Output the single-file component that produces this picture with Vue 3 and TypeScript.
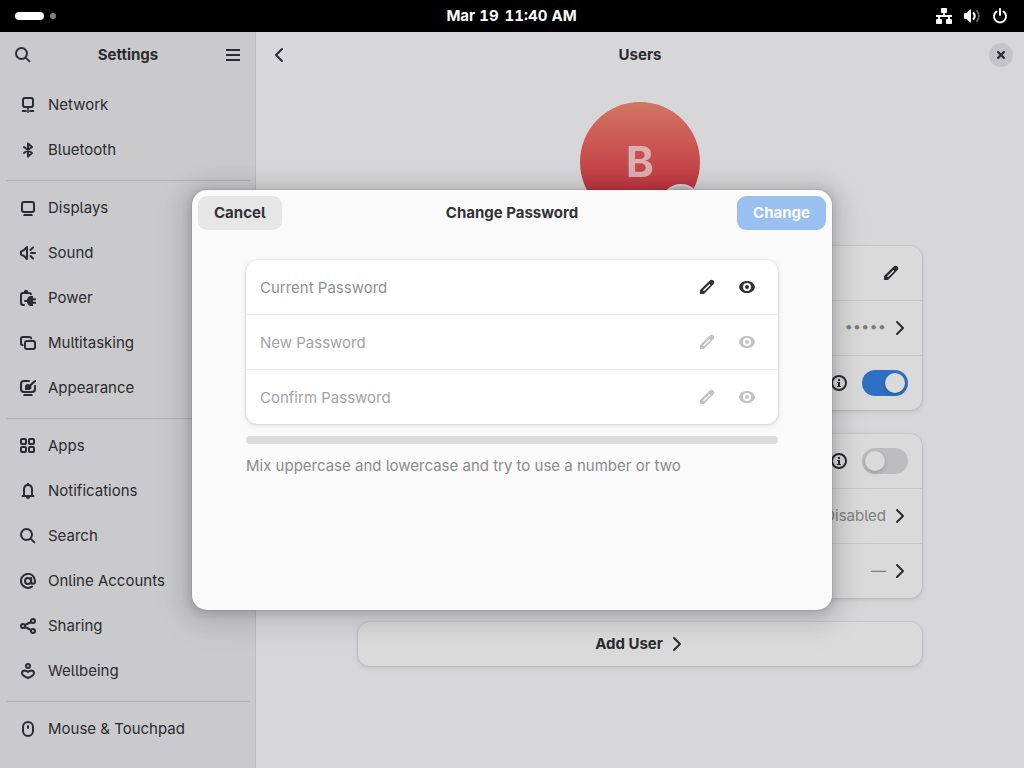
<script setup lang="ts">
import { h, ref } from 'vue'

interface Glyph {
  stroke?: string
  fill?: string
  faint?: string
}

const glyphs: Record<string, Glyph> = {
  search: { stroke: 'M12 6.5a5.5 5.5 0 1 1-11 0a5.5 5.5 0 0 1 11 0zM10.6 10.6L14.4 14.4' },
  menu: { fill: 'M1 2h14v2H1zM1 7h14v2H1zM1 12h14v2H1z' },
  back: { stroke: 'M11 2L5 8l6 6' },
  next: { stroke: 'M5 2l6 6-6 6' },
  close: { fill: 'M4 5q0-1 1-1h.6L8 6.400 10.400 4h.6q1 0 1 1v.6L9.600 8 12 10.400v.6q0 1-1 1h-.6L8 9.600 5.600 12H5q-1 0-1-1v-.6L6.400 8 4 5.600z' },
  network: {
    stroke: 'M5 1h6a2 2 0 0 1 2 2v5a2 2 0 0 1-2 2H5a2 2 0 0 1-2-2V3a2 2 0 0 1 2-2z',
    fill: 'M3 9h10v1l-1 1H4l-1-1zM7 10h2v2H7zM2 13h4v2H2zM10 13h4v2h-4zM8 11.800l2.200 2.200L8 16.200 5.800 14zM8 13.200l-.8.8.8.8.8-.8z'
  },
  bluetooth: { stroke: 'M4 5l8 6-4 3.500V1.500L12 5l-8 6' },
  displays: { stroke: 'M4 2h8a2 2 0 0 1 2 2v6a2 2 0 0 1-2 2H4a2 2 0 0 1-2-2V4a2 2 0 0 1 2-2z', fill: 'M4 14h8l1 2H3z' },
  sound: { stroke: 'M7 2v12L3.5 10.5H2.5L1 9.5v-3l1.5-1h1zM10.5 5L13 2.5M11 8h4M10.5 11l2.5 2.5' },
  power: {
    stroke: 'M4 15H3a2 2 0 0 1-2-2V5a2 2 0 0 1 2-2h6a2 2 0 0 1 2 1.2M5 11h3M13 9.2h2.2M13 12.8h2.2',
    fill: 'M4 1.5Q4 0 5 0h2q1 0 1 1.5V3H4zM10 6h3v10h-3q-3-1-3-5t3-5z'
  },
  multitasking: {
    stroke: 'M2.6 10.2Q1 10 1 8V4a2 2 0 0 1 2-2h6q2 0 2.2 1.4M7 6h6a2 2 0 0 1 2 2v4a2 2 0 0 1-2 2H7a2 2 0 0 1-2-2V8a2 2 0 0 1 2-2z'
  },
  appearance: {
    stroke: 'M9 1H4a3 3 0 0 0-3 3v5a3 3 0 0 0 3 3h8a3 3 0 0 0 3-3V6',
    fill: 'M4 14h8l1 2H3zM5 10V7q0-3 3-3 1 0 1.6.5L14 .5l2-.5v1.5L11.2 6q.3.6.3 1.2Q11.500 10 8 10z'
  },
  apps: {
    stroke: 'M2 1h3q1 0 1 1v3q0 1-1 1H2Q1 6 1 5V2q0-1 1-1zM10 1h3q1 0 1 1v3q0 1-1 1h-3Q9 6 9 5V2q0-1 1-1zM2 9h3q1 0 1 1v3q0 1-1 1H2q-1 0-1-1v-3q0-1 1-1zM10 9h3q1 0 1 1v3q0 1-1 1h-3q-1 0-1-1v-3q0-1 1-1z'
  },
  notifications: {
    stroke: 'M2.500 13h11M4 12.500V6.500Q4 2 8 2t4 4.500v6',
    fill: 'M7 0h2v2H7zM6 14h4q0 2-2 2t-2-2z'
  },
  accounts: {
    stroke: 'M12 13.600A7 7 0 1 1 15 8v.8a1.900 1.900 0 0 1-3.800 0V5M11 8a3 3 0 1 1-6 0a3 3 0 0 1 6 0z'
  },
  sharing: {
    stroke: 'M5 8a2 2 0 1 1-4 0a2 2 0 0 1 4 0zM15 3a2 2 0 1 1-4 0a2 2 0 0 1 4 0zM15 13a2 2 0 1 1-4 0a2 2 0 0 1 4 0zM5 7l6-3M5 9l6 3'
  },
  wellbeing: {
    stroke: 'M10 3a2 2 0 1 1-4 0a2 2 0 0 1 4 0zM8 9Q6.500 7.500 4.800 7.500 2 7.600 2 10.200 2 12.600 8 15q6-2.400 6-4.800 0-2.600-2.800-2.700Q9.500 7.500 8 9z'
  },
  mouse: { stroke: 'M8 1a5 5 0 0 1 5 5v4a5 5 0 0 1-10 0V6a5 5 0 0 1 5-5zM8 5v2' },
  pencil: { fill: 'M1 15v-4L10.800 1.600a2.500 2.500 0 0 1 3.600 3.600L5 15zM4 11.200l1 1 6.400-6.300-1-1z' },
  eye: {
    fill: 'M8 2C4 2 .8 4 0 8c.8 4 4 6 8 6s7.200-2 8-6c-.8-4-4-6-8-6zM8 4a4 4 0 1 1 0 8a4 4 0 0 1 0-8zM8 6a2 2 0 1 0 0 4a2 2 0 0 0 0-4z'
  },
  info: {
    stroke: 'M15 8A7 7 0 1 1 1 8a7 7 0 0 1 14 0z',
    fill: 'M7 4h2v2H7zM6 7h3v4h1v1H6v-1h1V8H6z'
  },
  wired: {
    fill: 'M6 0h4q1 0 1 1v3q0 1-1 1H9v2h7v2h-2v2h1q1 0 1 1v3q0 1-1 1h-4q-1 0-1-1v-3q0-1 1-1h1V9H4v2h1q1 0 1 1v3q0 1-1 1H1q-1 0-1-1v-3q0-1 1-1h1V9H0V7h7V5H6Q5 5 5 4V1q0-1 1-1z'
  },
  volume: {
    fill: 'M0 6q0-1 1-1h1.500L6 1.500h1v13H6L2.500 11H1q-1 0-1-1z',
    stroke: 'M9.500 5q2.500 3 0 6',
    faint: 'M13 2.800q3.800 5.200 0 10.400'
  },
  shutdown: { stroke: 'M4.600 3.500a6 6 0 1 0 6.800 0M8 1v6' }
}

const Icon = (props: { name: string }) => {
  const glyph = glyphs[props.name]
  const line = { fill: 'none', stroke: 'currentColor', 'stroke-width': 2, 'stroke-linecap': 'round', 'stroke-linejoin': 'round' }
  return h('svg', { class: 'icon', viewBox: '0 0 16 16', 'aria-hidden': 'true' }, [
    glyph.stroke ? h('path', { d: glyph.stroke, ...line }) : null,
    glyph.faint ? h('path', { d: glyph.faint, ...line, opacity: 0.35 }) : null,
    glyph.fill ? h('path', { d: glyph.fill, fill: 'currentColor', 'fill-rule': 'evenodd' }) : null
  ])
}
Icon.props = ['name']

const panels = [
  [
    { label: 'Network', icon: 'network' },
    { label: 'Bluetooth', icon: 'bluetooth' }
  ],
  [
    { label: 'Displays', icon: 'displays' },
    { label: 'Sound', icon: 'sound' },
    { label: 'Power', icon: 'power' },
    { label: 'Multitasking', icon: 'multitasking' },
    { label: 'Appearance', icon: 'appearance' }
  ],
  [
    { label: 'Apps', icon: 'apps' },
    { label: 'Notifications', icon: 'notifications' },
    { label: 'Search', icon: 'search' },
    { label: 'Online Accounts', icon: 'accounts' },
    { label: 'Sharing', icon: 'sharing' },
    { label: 'Wellbeing', icon: 'wellbeing' }
  ],
  [{ label: 'Mouse & Touchpad', icon: 'mouse' }]
]

const fields = ref([
  { label: 'Current Password', value: '', enabled: true },
  { label: 'New Password', value: '', enabled: false },
  { label: 'Confirm Password', value: '', enabled: false }
])

const administrator = ref(true)
const automaticLogin = ref(false)
</script>

<template>
  <div class="desktop">
    <header class="topbar">
      <button class="workspaces" aria-label="Activities"><span class="pill"></span><span class="dot"></span></button>
      <time class="clock"><span>Mar 19</span><span>11:40 AM</span></time>
      <button class="status" aria-label="System status">
        <Icon name="wired" /><Icon name="volume" /><Icon name="shutdown" />
      </button>
    </header>

    <div class="window">
      <aside class="sidebar">
        <header class="headerbar">
          <button class="flat" aria-label="Search settings"><Icon name="search" /></button>
          <h1>Settings</h1>
          <button class="flat" aria-label="Main menu"><Icon name="menu" /></button>
        </header>
        <nav>
          <ul v-for="(group, index) in panels" :key="index">
            <li v-for="panel in group" :key="panel.label">
              <a href="#"><Icon :name="panel.icon" /><span>{{ panel.label }}</span></a>
            </li>
          </ul>
        </nav>
      </aside>

      <main class="content">
        <header class="headerbar">
          <button class="flat" aria-label="Back"><Icon name="back" /></button>
          <h1>Users</h1>
          <button class="flat" aria-label="Close"><span class="round"><Icon name="close" /></span></button>
        </header>
        <div class="clamp">
          <div class="avatar">
            <span>B</span>
            <button class="badge" aria-label="Change picture"></button>
          </div>
          <section class="card">
            <div class="row"><button class="flat" aria-label="Edit name"><Icon name="pencil" /></button></div>
            <button class="row" aria-label="Password"><span class="bullets">•••••</span><Icon name="next" /></button>
            <div class="row">
              <button class="flat" aria-label="More about administrators"><Icon name="info" /></button>
              <input v-model="administrator" class="switch" type="checkbox" role="switch" aria-label="Administrator" />
            </div>
          </section>
          <section class="card">
            <div class="row">
              <button class="flat" aria-label="More about automatic login"><Icon name="info" /></button>
              <input v-model="automaticLogin" class="switch" type="checkbox" role="switch" aria-label="Automatic login" />
            </div>
            <button class="row" aria-label="Fingerprint login"><span>Disabled</span><Icon name="next" /></button>
            <button class="row" aria-label="Language"><span>—</span><Icon name="next" /></button>
          </section>
          <button class="card add"><span>Add User</span><Icon name="next" /></button>
        </div>
      </main>

      <div class="overlay">
        <form class="dialog" role="dialog" aria-labelledby="dialog-title" @submit.prevent>
          <header class="headerbar">
            <button class="action" type="button">Cancel</button>
            <h2 id="dialog-title">Change Password</h2>
            <button class="action suggested" type="submit" disabled>Change</button>
          </header>
          <div class="body">
            <div class="entries">
              <div v-for="field in fields" :key="field.label" class="entry" :class="{ disabled: !field.enabled }">
                <input v-model="field.value" type="password" :placeholder="field.label" :aria-label="field.label" :disabled="!field.enabled" />
                <Icon name="pencil" />
                <button class="reveal" type="button" aria-label="Show password" :disabled="!field.enabled"><Icon name="eye" /></button>
              </div>
            </div>
            <progress value="0" max="4" aria-label="Password strength"></progress>
            <p>Mix uppercase and lowercase and try to use a number or two</p>
          </div>
        </form>
      </div>
    </div>
  </div>
</template>

<style>
body {
  margin: 0;
}
</style>

<style scoped>
* {
  box-sizing: border-box;
}

.desktop {
  display: flex;
  flex-direction: column;
  min-height: 100vh;
  background: #000;
  color: #2b2b30;
  font: 15px/20px Inter, "Noto Sans", sans-serif;
  font-feature-settings: "cv05";
}

button,
input {
  margin: 0;
  padding: 0;
  border: 0;
  background: none;
  color: inherit;
  font: inherit;
  font-feature-settings: inherit;
}

h1,
h2 {
  flex: 1;
  margin: 0;
  font-size: 15px;
  line-height: 20px;
  font-weight: 700;
  text-align: center;
}

.icon {
  display: block;
  flex: none;
  width: 16px;
  height: 16px;
}

.topbar {
  display: grid;
  grid-template-columns: 1fr auto 1fr;
  align-items: center;
  height: 32px;
  padding: 0 16px 0 15px;
  color: #fff;
}

.workspaces,
.status,
.clock {
  display: flex;
  align-items: center;
}

.workspaces {
  gap: 6px;
}

.pill {
  width: 29px;
  height: 8px;
  border-radius: 4px;
  background: #fff;
}

.dot {
  width: 6px;
  height: 6px;
  border-radius: 50%;
  background: #808080;
}

.clock {
  gap: 6px;
  font-weight: 700;
  font-variant-numeric: tabular-nums;
}

.status {
  justify-self: end;
  gap: 12px;
}

.window {
  position: relative;
  display: flex;
  flex: 1;
}

.headerbar {
  display: flex;
  align-items: center;
  height: 46px;
  padding: 0 6px;
}

.flat {
  display: grid;
  place-items: center;
  flex: none;
  width: 34px;
  height: 34px;
}

.sidebar {
  flex: none;
  width: 256px;
  background: #cacacc;
  box-shadow: inset -1px 0 #bcbcbf;
}

ul {
  margin: 0 6px;
  padding: 4px 0 8px;
  list-style: none;
}

ul + ul {
  border-top: 1px solid #b0b0b3;
}

li a {
  display: flex;
  align-items: center;
  gap: 12px;
  height: 45px;
  padding: 1px 14px 0;
  color: inherit;
  text-decoration: none;
}

.content {
  flex: 1;
  min-width: 0;
  background: #d7d7d9;
}

.round {
  display: grid;
  place-items: center;
  width: 24px;
  height: 24px;
  border-radius: 50%;
  background: #c4c4c6;
}

.clamp {
  display: flex;
  flex-direction: column;
  gap: 24px;
  max-width: 564px;
  margin: 0 auto;
  padding: 24px 0;
}

.avatar {
  position: relative;
  display: grid;
  place-items: center;
  align-self: center;
  width: 120px;
  height: 120px;
  border-radius: 50%;
  background: linear-gradient(#d47563, #bd2d3c 85%);
  color: #dbb0b3;
  font-size: 42px;
  line-height: 48px;
  font-weight: 700;
}

.badge {
  position: absolute;
  right: -1px;
  bottom: -2px;
  width: 40px;
  height: 40px;
  border: 2px solid #d7d7d9;
  border-radius: 50%;
  background: #c4c4c6;
}

.card {
  display: flex;
  flex-direction: column;
  border-radius: 12px;
  background: #dadada;
  box-shadow: 0 0 0 1px rgba(0, 0, 6, 0.03), 0 1px 3px 1px rgba(0, 0, 6, 0.07), 0 2px 6px 2px rgba(0, 0, 6, 0.03);
}

.row {
  display: flex;
  align-items: center;
  justify-content: flex-end;
  gap: 6px;
  height: 54px;
  padding: 0 14px;
}

.row + .row {
  height: 55px;
  border-top: 1px solid #c8c8ca;
}

.row > span {
  color: #7e7e80;
}

.row > .bullets {
  font-family: "DejaVu Sans", sans-serif;
  font-size: 13px;
  font-weight: 700;
}

.switch {
  display: flex;
  appearance: none;
  width: 46px;
  height: 26px;
  padding: 3px;
  border-radius: 13px;
  background: #bdbdbf;
}

.switch::before {
  content: "";
  width: 20px;
  height: 20px;
  border-radius: 50%;
  background: #dadada;
  box-shadow: 0 2px 4px rgba(0, 0, 6, 0.2);
}

.switch:checked {
  justify-content: flex-end;
  background: #2e70c4;
}

.add {
  flex-direction: row;
  align-items: center;
  justify-content: center;
  gap: 6px;
  height: 44px;
  font-weight: 700;
}

.overlay {
  position: absolute;
  inset: 0;
  display: grid;
  place-items: center;
}

.dialog {
  width: min(640px, 100%);
  min-height: 420px;
  border-radius: 15px;
  background: #fafafa;
  color: #323237;
  box-shadow: 0 0 0 1px rgba(0, 0, 0, 0.05), 0 2px 8px 2px rgba(0, 0, 0, 0.13), 0 3px 20px 10px rgba(0, 0, 0, 0.09), 0 6px 32px 16px rgba(0, 0, 0, 0.04);
}

.dialog .headerbar {
  display: grid;
  grid-template-columns: 1fr auto 1fr;
}

.action {
  justify-self: start;
  height: 34px;
  padding: 0 16px;
  border-radius: 9px;
  background: #e6e6e6;
  font-weight: 700;
}

.suggested {
  justify-self: end;
  background: #99c0f1;
  color: #fdfdfe;
}

.body {
  display: flex;
  flex-direction: column;
  gap: 12px;
  padding: 24px 54px;
}

.entries {
  border-radius: 12px;
  background: #fff;
  box-shadow: 0 0 0 1px rgba(0, 0, 6, 0.03), 0 1px 3px 1px rgba(0, 0, 6, 0.07), 0 2px 6px 2px rgba(0, 0, 6, 0.03);
}

.entry {
  display: flex;
  align-items: center;
  height: 54px;
  padding: 0 14px;
}

.entry + .entry {
  height: 55px;
  border-top: 1px solid #ebebec;
}

.entry input {
  flex: 1;
  min-width: 0;
  height: 34px;
  outline: none;
}

.entry input::placeholder {
  color: #8f8f91;
  opacity: 1;
}

.entry.disabled input::placeholder {
  color: #a3a3a5;
}

.entry.disabled .icon {
  color: #c2c2c3;
}

.reveal {
  display: grid;
  place-items: center;
  width: 34px;
  height: 34px;
  margin-left: 15px;
}

progress {
  appearance: none;
  display: block;
  width: 100%;
  height: 8px;
  border: 0;
  border-radius: 4px;
  overflow: hidden;
}

progress::-webkit-progress-bar {
  background: #dbdbdb;
}

p {
  margin: 0;
  color: #8b8b8e;
}
</style>
